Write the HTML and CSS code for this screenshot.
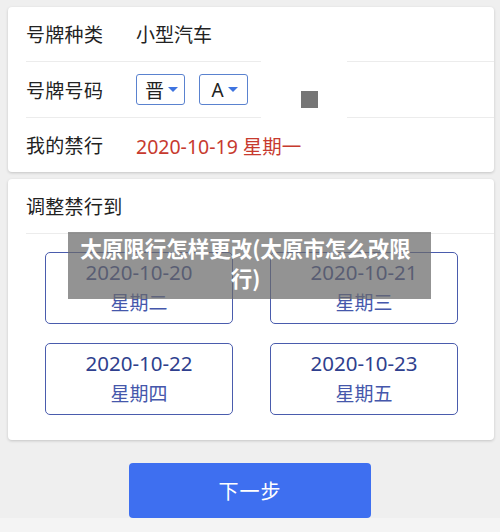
FILE: index.html
```html
<!DOCTYPE html>
<html>
<head>
  <meta charset="UTF-8">
  <title>调整禁行</title>
  <link rel="stylesheet" href="styles.css">
</head>
<body>
  <div class="card info-card">
    <div class="row">
      <span class="label">号牌种类</span>
      <span class="value">小型汽车</span>
    </div>
    <div class="row">
      <span class="label">号牌号码</span>
      <span class="value selects">
        <span class="select">晋<i class="caret"></i></span>
        <span class="select">A<i class="caret"></i></span>
      </span>
    </div>
    <div class="row">
      <span class="label">我的禁行</span>
      <span class="value red">2020-10-19 星期一</span>
    </div>
    <div class="patch"><span class="dot"></span></div>
  </div>

  <div class="card adjust-card">
    <div class="row title-row">
      <span class="label">调整禁行到</span>
    </div>
    <div class="day-grid">
      <div class="day"><span class="date">2020-10-20</span><span class="week">星期二</span></div>
      <div class="day"><span class="date">2020-10-21</span><span class="week">星期三</span></div>
      <div class="day"><span class="date">2020-10-22</span><span class="week">星期四</span></div>
      <div class="day"><span class="date">2020-10-23</span><span class="week">星期五</span></div>
    </div>
  </div>

  <div class="actions">
    <button class="next-btn">下一步</button>
  </div>
  <div class="bottom-strip"></div>

  <div class="caption">太原限行怎样更改(太原市怎么改限行)</div>
</body>
</html>
```

FILE: styles.css
```css
html {
  background: #efefef;
}
body {
  margin: 0;
  padding: 7px 6px 0 8px;
  font-family: "Noto Sans", "Noto Sans CJK SC", sans-serif;
  color: #222;
  position: relative;
  height: 525px;
  overflow: hidden;
}
.card {
  background: #fff;
  border-radius: 4px;
  box-shadow: 0 1px 3px rgba(0, 0, 0, 0.18);
  position: relative;
}
.row {
  display: flex;
  align-items: center;
  height: 54px;
  margin-left: 18px;
  border-bottom: 1px solid #ececec;
}
.info-card .row:nth-child(2) {
  height: 55px;
}
.info-card .row:nth-child(3) {
  border-bottom: none;
}
.label {
  font-size: 19px;
  width: 110px;
  letter-spacing: 0.3px;
}
.value {
  font-size: 19px;
}
.red {
  color: #c73a2e;
  font-size: 19.5px;
}
.selects {
  display: flex;
  gap: 14px;
}
.select {
  display: flex;
  align-items: center;
  justify-content: center;
  gap: 4px;
  width: 45px;
  height: 29px;
  border: 1px solid #5a82cf;
  border-radius: 3px;
  font-size: 19px;
  padding-left: 2px;
  box-sizing: content-box;
}
.caret {
  width: 0;
  height: 0;
  border-left: 5px solid transparent;
  border-right: 5px solid transparent;
  border-top: 5px solid #3e74e0;
}
.patch {
  position: absolute;
  left: 253px;
  top: 52px;
  width: 86px;
  height: 62px;
  background: #fff;
}
.dot {
  position: absolute;
  left: 40px;
  top: 32px;
  width: 17px;
  height: 17px;
  background: #767676;
}
.adjust-card {
  margin-top: 7px;
  padding-bottom: 25px;
}
.title-row .label {
  width: auto;
}
.day-grid {
  display: grid;
  grid-template-columns: 188px 188px;
  gap: 19px 37px;
  padding: 18px 36px 0 37px;
}
.day {
  display: flex;
  flex-direction: column;
  align-items: center;
  justify-content: center;
  height: 70px;
  border: 1px solid #4a5cad;
  border-radius: 5px;
  line-height: 31px;
}
.date {
  font-size: 20.5px;
  color: #2f3f8e;
}
.week {
  font-size: 19px;
  color: #4557ab;
}
.actions {
  display: flex;
  justify-content: center;
  padding: 23px 0 0 0;
  margin-left: -2px;
}
.next-btn {
  width: 242px;
  height: 55px;
  border: none;
  border-radius: 4px;
  background: #3e6ff0;
  color: #fff;
  font-family: "Noto Sans CJK SC", sans-serif;
  font-size: 20px;
  letter-spacing: 1px;
}
.bottom-strip {
  position: absolute;
  left: 0;
  right: 0;
  top: 518px;
  height: 14px;
  background: #f4f4f4;
  z-index: -1;
}
.caption {
  position: absolute;
  left: 68px;
  top: 232px;
  width: 363px;
  height: 67px;
  box-sizing: border-box;
  padding: 1px 12px 0 4px;
  background: rgba(105, 105, 105, 0.72);
  color: #fff;
  font-family: "Noto Sans CJK SC", sans-serif;
  font-weight: bold;
  font-size: 21.5px;
  line-height: 30px;
  text-align: center;
}
```
